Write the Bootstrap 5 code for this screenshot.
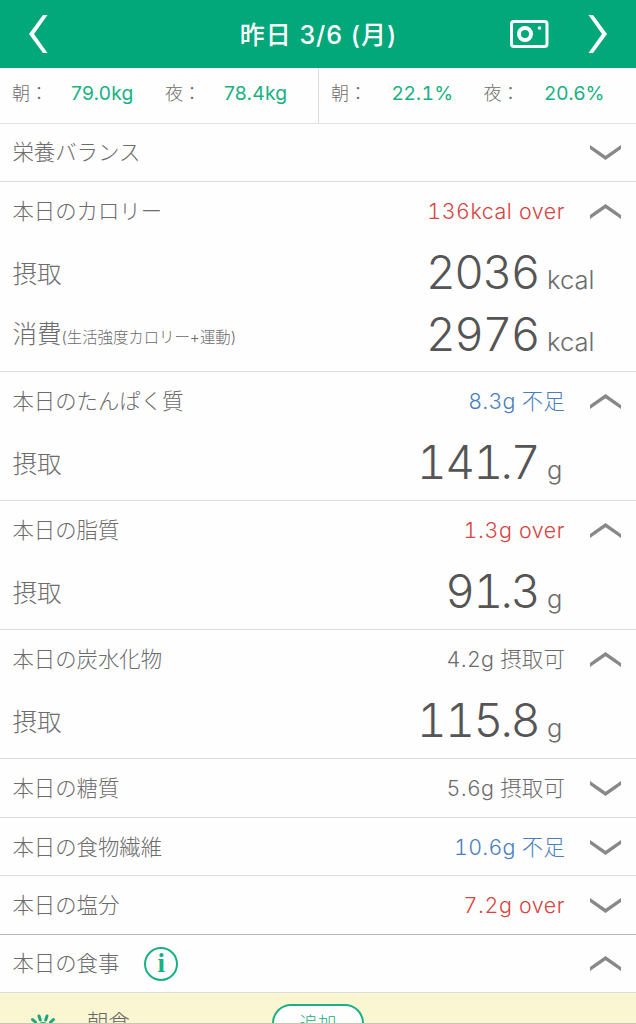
<!DOCTYPE html>
<html lang="ja">
<head>
<meta charset="utf-8">
<meta name="viewport" content="width=device-width, initial-scale=1">
<title>昨日 3/6 (月)</title>
<link href="https://cdn.jsdelivr.net/npm/bootstrap@5.3.0/dist/css/bootstrap.min.css" rel="stylesheet">
<style>
  body { font-family: Inter, "Noto Sans CJK JP", sans-serif; font-weight: 300; color: #6c6c6c; height: 1024px; overflow: hidden; background: #fefefe; line-height: 1; }
  .topbar { height: 68px; background: #02a879; color: #fff; padding: 0 27px 0 28px; }
  .topbar h1 { font-size: 25px; font-weight: 500; letter-spacing: 1px; padding-top: 1px; }
  .bar-side { width: 150px; }
  .body-stats { height: 56px; border-bottom: 1px solid #e3e3e3; }
  .stat-half { padding: 0 0 4px 12px; width: 318px; }
  .stat-half + .stat-half { border-left: 1px solid #ddd; }
  .stat-label { width: 59px; font-size: 18px; }
  .stat-num { width: 94px; color: #19b183; font-weight: 400; font-size: 19.3px; letter-spacing: .2px; }
  .stat-half + .stat-half .stat-num { padding-left: 2px; }
  .section { border-bottom: 1px solid #dcdcdc; }
  .head-row { height: 58px; padding: 0 15px 0 12.4px; font-size: 21.4px; }
  .head-row > .txt { padding-top: 1px; }
  .open .head-row { height: 59px; }
  .status { margin-right: 25px; letter-spacing: .2px; }
  .tab-num { font-feature-settings: "tnum"; }
  .over { color: #d64541; letter-spacing: .55px; }
  .lack { color: #4a7fbd; }
  .val-row { height: 62px; padding: 0 40px 0 12.4px; }
  .val-label { font-size: 24.5px; }
  .note { font-size: 15.4px; }
  .amount { font-size: 46px; color: #555; letter-spacing: -1.5px; margin-right: 1px; }
  .amount .dot { margin: 0 -1px 0 -1.5px; }
  .unit { font-size: 25.500px; width: 49px; margin-left: 7px; }
  .meal { background: #faf6d2; height: 31px; overflow: hidden; border-bottom: 1px solid #c9c6b3; padding-left: 28px; }
  .meal-name { width: 213px; font-size: 21.400px; padding: 19px 0 0 28px; color: #666; }
  .info { width: 34px; height: 34px; border: 2px solid #19b183; color: #19b183; font: 700 27px "Liberation Serif", serif; margin-left: 25px; }
  .add-btn { width: 92px; height: 46px; border: 2px solid #19b183; color: #19b183; border-radius: 19px; font-size: 18.500px; padding-top: 8px; margin-top: 11px; background: #fefefe; }
</style>
</head>
<body class="d-flex flex-column">
<svg class="d-none"><defs>
  <symbol id="down" viewBox="0 0 31 15"><path d="M0 0 15.500 10.800 31 0v4L15.500 15 0 4z" fill="#888"/></symbol>
  <symbol id="up" viewBox="0 0 31 15"><path d="M0 15 15.500 4.200 31 15v-4L15.500 0 0 11z" fill="#888"/></symbol>
</defs></svg>

<header class="topbar d-flex align-items-center flex-shrink-0">
  <div class="bar-side"><svg width="22" height="38" viewBox="0 0 22 38"><path d="M15 0H19.500L6 19 19.500 38H15L1 19z" fill="#fff"/></svg></div>
  <h1 class="m-0 flex-grow-1 text-center text-nowrap">昨日 3/6 (月)</h1>
  <div class="bar-side d-flex align-items-center justify-content-between" style="padding-left:50px">
    <svg width="40" height="30" viewBox="0 0 40 30"><rect x="2.500" y="2.500" width="35.500" height="25" rx="2.500" fill="none" stroke="#fff" stroke-width="3"/><circle cx="16" cy="15" r="6" fill="none" stroke="#fff" stroke-width="4"/><circle cx="30.500" cy="9" r="1.800" fill="#fff"/></svg>
    <svg width="22" height="38" viewBox="0 0 22 38"><path d="M6 0H1.500L15 19 1.500 38H6L20 19z" fill="#fff"/></svg>
  </div>
</header>

<div class="body-stats d-flex flex-shrink-0">
  <div class="stat-half d-flex align-items-center"><span class="stat-label">朝：</span><span class="stat-num">79.0kg</span><span class="stat-label">夜：</span><span class="stat-num">78.4kg</span></div>
  <div class="stat-half d-flex align-items-center"><span class="stat-label">朝：</span><span class="stat-num">22.<span class="tab-num">1</span>%</span><span class="stat-label">夜：</span><span class="stat-num">20.6%</span></div>
</div>

<main>
  <section class="section"><div class="head-row d-flex align-items-center" style="height:57px"><span class="txt">栄養バランス</span><svg class="ms-auto" width="31" height="15"><use href="#down"/></svg></div></section>
</main>
<script src="https://cdn.jsdelivr.net/npm/bootstrap@5.3.0/dist/js/bootstrap.bundle.min.js"></script>
<script>
  const main = document.querySelector('main');
  const rows = [
    ['カロリー', '136kcal over', 'over', [['摂取', '', '2036', 'kcal'], ['消費', '(生活強度カロリー+運動)', '2976', 'kcal']]],
    ['たんぱく質', '8.3g 不足', 'lack', [['摂取', '', '141.7', 'g']]],
    ['脂質', '1.3g over', 'over', [['摂取', '', '91.3', 'g']]],
    ['炭水化物', '4.2g 摂取可', '', [['摂取', '', '115.8', 'g']]],
    ['糖質', '5.6g 摂取可', '', []],
    ['食物繊維', '10.6g 不足', 'lack', []],
    ['塩分', '7.2g over', 'over', []]
  ];
  // equal-width digits, while the decimal point keeps its own narrow width
  const digits = s => s.replace(/\d+|\./g, d => `<span class="${d === '.' ? 'dot' : 'tab-num'}">${d}</span>`);
  rows.forEach(([name, status, tone, values], i) => {
    const open = values.length > 0;
    const pad = values.length === 2 ? 6 : 7;
    const height = open ? 60 + 62 * values.length + pad : (i === 5 ? 58 : 59);
    main.insertAdjacentHTML('beforeend', `<section class="section ${open ? 'open' : ''}" style="height:${height}px">
      <div class="head-row d-flex align-items-center"><span class="txt">本日の${name}</span><span class="txt status ms-auto ${tone}">${digits(status)}</span><svg width="31" height="15"><use href="#${open ? 'up' : 'down'}"/></svg></div>
      ${values.map(([l, n, v, u]) => `<div class="val-row d-flex align-items-center"><div class="text-nowrap pt-${n ? 0 : 1}"><span class="val-label">${l}</span><span class="note">${n}</span></div><div class="ms-auto d-flex align-items-baseline"><span class="amount">${digits(v)}</span><span class="unit">${u}</span></div></div>`).join('')}
    </section>`);
  });
  main.lastElementChild.style.borderBottomColor = '#b5b5b5';
  main.insertAdjacentHTML('beforeend', `<section class="section"><div class="head-row d-flex align-items-center" style="height:57px"><span class="txt">本日の食事</span><span class="info rounded-circle d-flex align-items-center justify-content-center">i</span><svg class="ms-auto" width="31" height="15"><use href="#up"/></svg></div></section>
  <div class="meal d-flex"><svg class="flex-shrink-0" width="31" height="50" viewBox="0 0 31 50"><g stroke="#19a87d" stroke-width="3" stroke-linecap="round"><path d="M11 23l1.300 4M19 23l-1.300 4M4.500 26.500l3 2.800M25.500 26.500l-3 2.800"/></g><circle cx="15" cy="35.500" r="6.500" fill="#19a87d"/></svg><span class="meal-name">朝食</span><div class="add-btn text-center">追加</div></div>`);
</script>
</body>
</html>
